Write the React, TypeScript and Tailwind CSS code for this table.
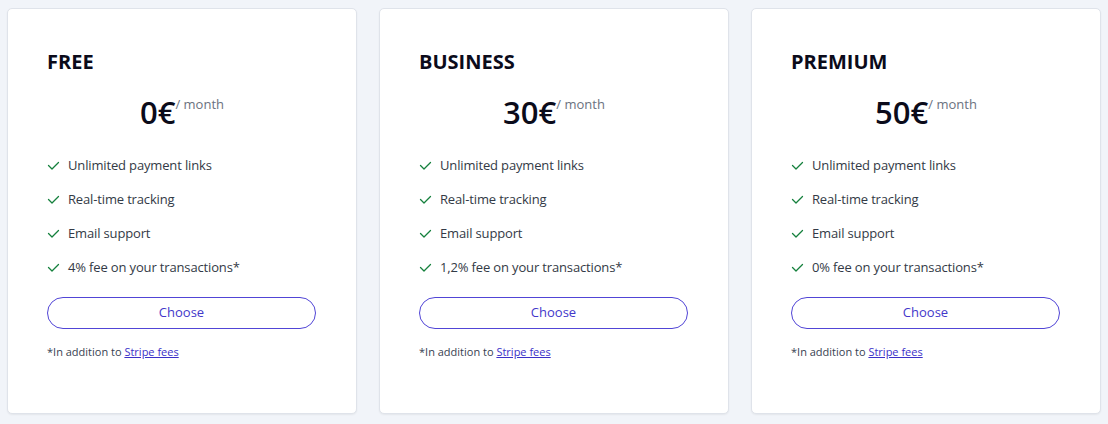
import React from "react";

const plans = [
  { name: "FREE", price: "0", fee: "4% fee on your transactions*" },
  { name: "BUSINESS", price: "30", fee: "1,2% fee on your transactions*" },
  { name: "PREMIUM", price: "50", fee: "0% fee on your transactions*" },
];

function Check() {
  return (
    <svg width="13" height="13" viewBox="0 0 13 13" fill="none" className="shrink-0">
      <polyline points="1.5,6.5 5,10 11.5,3.5" stroke="#15803d" strokeWidth="1.3" strokeLinecap="round" strokeLinejoin="round" />
    </svg>
  );
}

export default function App() {
  return (
    <div
      className="w-[1108px] h-[424px] bg-[#f1f4f9] px-[7px] pt-[8px] grid grid-cols-3 gap-[22px] items-start"
      style={{ fontFamily: '"Open Sans", "Noto Sans", sans-serif' }}
    >
      {plans.map((p) => (
        <div
          key={p.name}
          className="h-[406px] bg-white border border-[#dfe3ea] rounded-[5px] shadow-[0_1px_2px_rgba(0,0,0,0.06)] px-[39px] pt-[39px]"
        >
          <div className="text-[20px] leading-[28px] font-bold text-[#0b0b1a]">{p.name}</div>
          <div className="mt-[17px] flex justify-center items-start">
            <span className="text-[31px] leading-[38px] font-semibold text-[#0b0b1a]">{p.price}€</span>
            <span className="text-[13px] leading-[18px] text-[#6b7280] mt-[2px]">/ month</span>
          </div>
          <ul className="mt-[24px] flex flex-col gap-[14px] text-[13px] leading-[20px] tracking-[-0.15px] text-[#333a46]">
            {["Unlimited payment links", "Real-time tracking", "Email support", p.fee].map((f) => (
              <li key={f} className="flex items-center gap-[8px]">
                <Check />
                <span>{f}</span>
              </li>
            ))}
          </ul>
          <button className="mt-[20px] w-[269px] h-[32px] rounded-full border border-[#5145d6] text-[#4338ca] text-[13px] flex items-center justify-center bg-white">
            Choose
          </button>
          <div className="mt-[15px] text-[11px] leading-[16px] text-[#374151]">
            *In addition to <a className="underline text-[#3b30c8]" href="#">Stripe fees</a>
          </div>
        </div>
      ))}
    </div>
  );
}
